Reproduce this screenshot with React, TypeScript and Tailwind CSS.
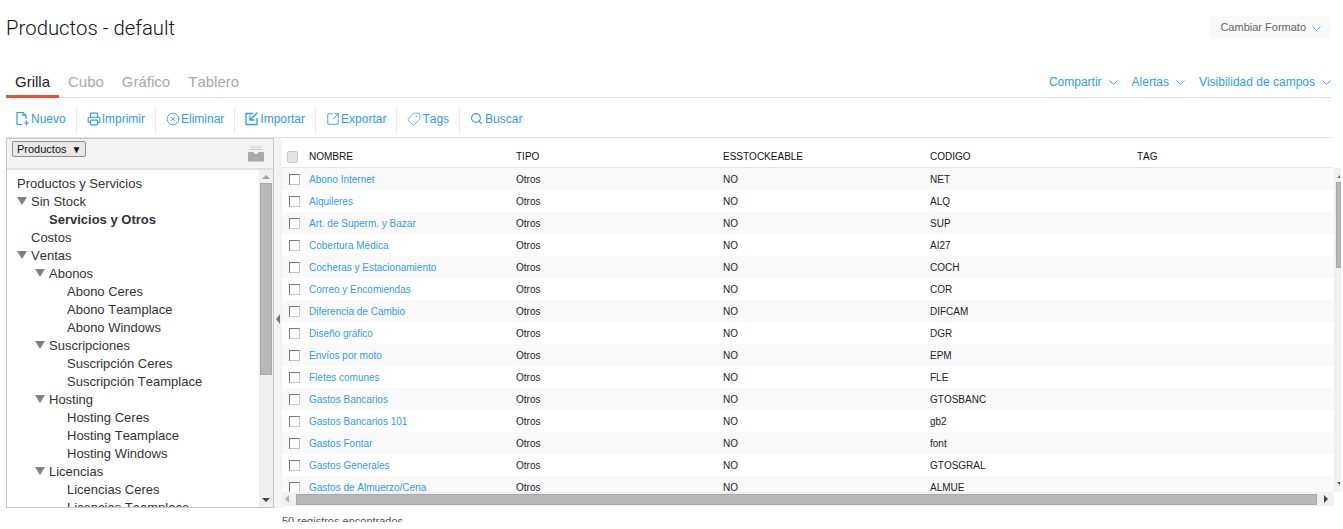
import React from "react";
import { Printer, CircleX, Search, Tag, SquareArrowOutUpRight } from "lucide-react";

interface TreeNode {
  label: string;
  level: number;
  arrow?: boolean;
  bold?: boolean;
}

const tree: TreeNode[] = [
  { label: "Productos y Servicios", level: 0 },
  { label: "Sin Stock", level: 1, arrow: true },
  { label: "Servicios y Otros", level: 2, bold: true },
  { label: "Costos", level: 1 },
  { label: "Ventas", level: 1, arrow: true },
  { label: "Abonos", level: 2, arrow: true },
  { label: "Abono Ceres", level: 3 },
  { label: "Abono Teamplace", level: 3 },
  { label: "Abono Windows", level: 3 },
  { label: "Suscripciones", level: 2, arrow: true },
  { label: "Suscripción Ceres", level: 3 },
  { label: "Suscripción Teamplace", level: 3 },
  { label: "Hosting", level: 2, arrow: true },
  { label: "Hosting Ceres", level: 3 },
  { label: "Hosting Teamplace", level: 3 },
  { label: "Hosting Windows", level: 3 },
  { label: "Licencias", level: 2, arrow: true },
  { label: "Licencias Ceres", level: 3 },
  { label: "Licencias Teamplace", level: 3 },
];

const rows = [
  ["Abono Internet", "NET"],
  ["Alquileres", "ALQ"],
  ["Art. de Superm. y Bazar", "SUP"],
  ["Cobertura Médica", "AI27"],
  ["Cocheras y Estacionamiento", "COCH"],
  ["Correo y Encomiendas", "COR"],
  ["Diferencia de Cambio", "DIFCAM"],
  ["Diseño gráfico", "DGR"],
  ["Envíos por moto", "EPM"],
  ["Fletes comunes", "FLE"],
  ["Gastos Bancarios", "GTOSBANC"],
  ["Gastos Bancarios 101", "gb2"],
  ["Gastos Fontar", "font"],
  ["Gastos Generales", "GTOSGRAL"],
  ["Gastos de Almuerzo/Cena", "ALMUE"],
];

// thin chevron used by every dropdown
const Chevron = () => (
  <svg width="9" height="6" viewBox="0 0 9 6" fill="none" stroke="#5aa5e6" strokeWidth="1" className="mt-[2px] shrink-0">
    <path d="M0.5 0.5L4.5 4.5L8.5 0.5" />
  </svg>
);

const NewIcon = () => (
  <svg width="14" height="15" viewBox="0 0 14 15" fill="none" stroke="#2f9bf4" strokeWidth="1.2">
    <path d="M6.5 13.5H1V1.5H7L10 4.5V8" />
    <path d="M7 1.5V4.5H10" />
    <path d="M8 12H13M10.5 9.5V14.5" />
  </svg>
);

const ImportIcon = () => (
  <svg width="14" height="15" viewBox="0 0 14 15" fill="none" stroke="#2f9bf4" strokeWidth="1.3">
    <path d="M8 2.5H1V13.5H12V7" />
    <path d="M12.5 1.5L5.5 8.5M5 4.5V9H9.5" />
  </svg>
);

const Toolbar = () => {
  const items = [
    { label: "Nuevo", icon: <NewIcon />, gap: "gap-px" },
    { label: "Imprimir", icon: <Printer size={14} strokeWidth={2} />, gap: "gap-px" },
    { label: "Eliminar", icon: <CircleX size={14} strokeWidth={1.5} />, gap: "gap-px" },
    { label: "Importar", icon: <ImportIcon />, gap: "gap-px" },
    { label: "Exportar", icon: <SquareArrowOutUpRight size={14} strokeWidth={1.6} />, gap: "gap-px" },
    { label: "Tags", icon: <Tag size={14} strokeWidth={1.3} className="-scale-x-100" />, gap: "gap-px" },
    { label: "Buscar", icon: <Search size={13} strokeWidth={2.2} />, gap: "gap-[2px]" },
  ];
  return (
    <div className="mr-3 flex h-10 items-start border-b border-[#e4e4e4] pt-[10px]">
      {items.map((item, i) => (
        <div
          key={item.label}
          className={`flex h-[25px] items-center px-[10px] pb-[4px] text-[12px] text-[#2f9bf4] ${item.gap} ${
            i < items.length - 1 ? "border-r border-[#e8e8e8]" : ""
          }`}
        >
          {item.icon}
          <span>{item.label}</span>
        </div>
      ))}
    </div>
  );
};

const TreePanel = () => (
  <div className="box-border flex h-[370px] w-[267px] shrink-0 flex-col border-b border-l border-t border-[#c8c8c8]">
    <div className="flex h-[31px] shrink-0 items-start justify-between border-b-2 border-[#e2e2e2] bg-[#f3f3f3] pl-[5px] pr-[9px] pt-[2px]">
      <div className="flex h-[16px] items-center gap-[5px] rounded-[2px] border border-[#8f8f8f] bg-[#e8e8e8] px-[4px] text-[11px] text-[#111]">
        <span>Productos</span>
        <span className="text-[10px]">▼</span>
      </div>
      <svg width="16" height="16" viewBox="0 0 16 16" className="mt-[5px]" fill="#a8a8a8">
        <rect x="2.5" y="0.5" width="11" height="1" fill="#c8c8c8" />
        <rect x="1.5" y="3" width="13" height="1" fill="#c8c8c8" />
        <path d="M0 6H5.5L6.5 8H9.5L10.5 6H16V15.5H0Z" />
      </svg>
    </div>
    <div className="flex min-h-0 flex-1">
      <div className="min-w-0 flex-1 overflow-hidden pt-[5px] text-[13px] text-[#333]">
        {tree.map((node) => (
          <div
            key={node.label}
            className={`flex h-[18px] items-center whitespace-nowrap ${node.bold ? "font-bold" : ""} ${
              node.level === 0 ? "pl-[10px]" : node.level === 1 ? "pl-[24px]" : node.level === 2 ? "pl-[42px]" : "pl-[60px]"
            }`}
          >
            <span className="relative">
              {node.arrow && (
                <span className="absolute -left-[14px] top-[5px] h-0 w-0 border-x-[5px] border-t-[8px] border-x-transparent border-t-[#808080]" />
              )}
              {node.label}
            </span>
          </div>
        ))}
      </div>
      <div className="flex w-[14px] shrink-0 flex-col items-center bg-[#f0f0f0]">
        <div className="mt-[5px] h-0 w-0 border-x-[4px] border-b-[4px] border-x-transparent border-b-[#a0a0a0]" />
        <div className="mt-[4px] h-[192px] w-[12px] border border-[#a8a8a8] bg-[#b8b8b8]" />
        <div className="mb-[5px] mt-auto h-0 w-0 border-x-[4px] border-t-[4px] border-x-transparent border-t-[#444]" />
      </div>
    </div>
  </div>
);

const Cell = ({ children, className = "" }: { children: React.ReactNode; className?: string }) => (
  <div className={`w-[207px] shrink-0 whitespace-nowrap ${className}`}>{children}</div>
);

const Grid = () => (
  <div className="flex min-w-0 flex-1 flex-col">
    <div className="mr-[11px] flex h-[30px] shrink-0 items-center border-b border-[#e6e6e6] pl-[5px] pt-[7px] text-[10px] text-[#111]">
      <div className="mr-[11px] mt-[1px] h-[12px] w-[11px] shrink-0 rounded-[2px] border border-[#c9c9c9] bg-[#e3e3e3]" />
      <Cell>NOMBRE</Cell>
      <Cell>TIPO</Cell>
      <Cell>ESSTOCKEABLE</Cell>
      <Cell>CODIGO</Cell>
      <Cell>TAG</Cell>
    </div>
    <div className="flex h-[324px] shrink-0">
      <div className="min-w-0 flex-1 overflow-hidden">
        {rows.map(([name, code], i) => (
          <div
            key={name}
            className={`flex h-[22px] items-center pl-[7px] text-[10px] text-[#222] ${i % 2 === 0 ? "bg-[#f9f9f9]" : "bg-white"}`}
          >
            <div className="mr-[9px] h-[11px] w-[11px] shrink-0 border border-b-[#c4c4c4] border-l-[#777] border-r-[#c4c4c4] border-t-[#777] bg-white" />
            <Cell className="text-[#2f9bf4]">{name}</Cell>
            <Cell>Otros</Cell>
            <Cell>NO</Cell>
            <Cell>{code}</Cell>
          </div>
        ))}
      </div>
      <div className="mr-[2px] flex w-[7px] shrink-0 flex-col items-end bg-[#f0f0f0]">
        <div className="mr-[1px] mt-[7px] h-0 w-0 border-b-[3px] border-l-[3px] border-b-[#666] border-l-transparent" />
        <div className="mt-[4px] h-[86px] w-[5px] border border-[#a8a8a8] bg-[#b8b8b8]" />
        <div className="mb-[7px] mr-[1px] mt-auto h-0 w-0 border-l-[3px] border-t-[3px] border-l-transparent border-t-[#444]" />
      </div>
    </div>
    <div className="mr-[9px] flex h-[14px] shrink-0 items-center bg-[#f0f0f0]">
      <div className="ml-[3px] h-0 w-0 border-y-[4px] border-r-[4px] border-y-transparent border-r-[#b0b0b0]" />
      <div className="ml-[7px] h-[11px] w-[1021px] border border-[#a8a8a8] bg-[#b8b8b8]" />
      <div className="ml-[7px] h-0 w-0 border-y-[4px] border-l-[4px] border-y-transparent border-l-[#444]" />
    </div>
  </div>
);

export default function App() {
  return (
    <div className="h-[522px] overflow-hidden bg-white font-['Liberation_Sans',sans-serif] [font-kerning:none]">
      {/* Title */}
      <div className="flex h-[66px] items-start justify-between pl-[6px] pr-[12px]">
        <h1 className="mt-[15px] font-['Roboto',sans-serif] text-[20.3px] font-light leading-[26px] text-[#111]">
          Productos - default
        </h1>
        <div className="mt-4 flex h-[23px] items-center gap-[6px] rounded-[3px] bg-[#f9f9f9] pl-[10px] pr-[10px] text-[11px] text-[#666]">
          <span>Cambiar Formato</span>
          <Chevron />
        </div>
      </div>

      {/* Tabs */}
      <div className="ml-[6px] mr-3 flex h-[32px] items-stretch justify-between border-b border-[#dddddd]">
        <div className="flex text-[15px] text-[#aaa]">
          <div className="flex h-[32px] w-[53px] items-center justify-center border-b-[3px] border-[#ec4f33] pt-[3px] text-[#222]">Grilla</div>
          <div className="flex h-[32px] items-center px-[9px]">Cubo</div>
          <div className="flex h-[32px] items-center px-[9px]">Gráfico</div>
          <div className="flex h-[32px] items-center pl-[9px]">Tablero</div>
        </div>
        <div className="flex items-center gap-[14px] text-[12px] text-[#2f9bf4]">
          <div className="flex items-center gap-[7px]">Compartir <Chevron /></div>
          <div className="flex items-center gap-[7px]">Alertas <Chevron /></div>
          <div className="flex items-center gap-[7px]">Visibilidad de campos <Chevron /></div>
        </div>
      </div>

      <div className="ml-[6px]">
        <Toolbar />
        <div className="flex">
          <TreePanel />
          <div className="flex h-[370px] w-[9px] shrink-0 items-center justify-center border-l border-[#c8c8c8] bg-[#f3f3f3]">
            <div className="mb-[9px] h-0 w-0 border-y-[5px] border-r-[4px] border-y-transparent border-r-[#777]" />
          </div>
          <Grid />
        </div>
        <div className="ml-[276px] mt-[5px] text-[11px] text-[#555]">50 registros encontrados</div>
      </div>
    </div>
  );
}
